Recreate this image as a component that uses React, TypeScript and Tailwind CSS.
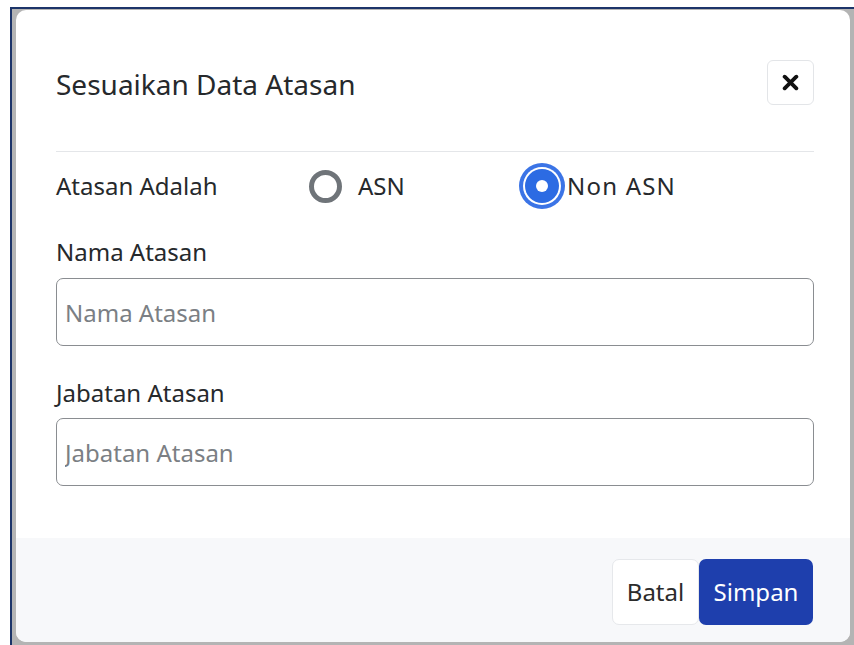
import { useState } from 'react'

type Choice = 'asn' | 'non-asn'

function Radio({ checked }: { checked: boolean }) {
  if (checked) {
    return (
      <span className="flex h-[34px] w-[34px] shrink-0 items-center justify-center rounded-full bg-[#2c6be3] shadow-[0_0_0_2px_#ffffff,0_0_0_6px_#3b74e6]">
        <span className="h-[12px] w-[12px] rounded-full bg-white" />
      </span>
    )
  }
  return <span className="h-[33px] w-[33px] shrink-0 rounded-full border-[5px] border-[#6f7479] bg-white" />
}

function CloseIcon() {
  return (
    <svg width="17" height="17" viewBox="0 0 16 16" fill="none">
      <path d="M2.5 2.5 13.5 13.5M13.5 2.5 2.5 13.5" stroke="#111" strokeWidth="3.6" strokeLinecap="round" />
    </svg>
  )
}

export default function App() {
  const [choice, setChoice] = useState<Choice>('non-asn')

  return (
    <div className="h-[645px] w-[854px] overflow-hidden bg-white pl-[10px] pt-[7px] font-['Noto_Sans',sans-serif] text-[#26292c]">
      <div className="h-[640px] w-[844px] border-l-2 border-t-2 border-[#1c3469] bg-[#b4b4b4]">
        <div className="ml-[4px] mt-[1px] flex h-[632px] w-[834px] flex-col overflow-hidden rounded-[10px] bg-white">
          {/* Header */}
          <div className="px-[40px] pt-[50px]">
            <div className="flex h-[45px] w-[758px] items-center justify-between">
              <h2 className="mt-[3px] text-[28px] leading-none">Sesuaikan Data Atasan</h2>
              <button className="flex h-[45px] w-[47px] items-center justify-center rounded-[6px] border border-[#e3e5e8] bg-white">
                <CloseIcon />
              </button>
            </div>
            <div className="mt-[46px] w-[758px] border-t border-[#e4e6e9]" />
          </div>

          {/* Body */}
          <div className="px-[40px] text-[24px]">
            <div className="mt-[11px] flex h-[46px] items-center">
              <span className="w-[253px] shrink-0">Atasan Adalah</span>
              <label className="flex w-[216px] items-center" onClick={() => setChoice('asn')}>
                <Radio checked={choice === 'asn'} />
                <span className="ml-[16px]">ASN</span>
              </label>
              <label className="flex items-center" onClick={() => setChoice('non-asn')}>
                <Radio checked={choice === 'non-asn'} />
                <span className="ml-[8px] tracking-[0.05em]">Non ASN</span>
              </label>
            </div>

            <div className="mt-[28px] leading-[30px]">Nama Atasan</div>
            <input
              placeholder="Nama Atasan"
              className="mt-[11px] h-[68px] w-[758px] rounded-[7px] border-[1.5px] border-[#8a8d91] bg-white px-[8px] text-[24px] outline-none placeholder:text-[#7b7f84]"
            />

            <div className="mt-[32px] leading-[30px]">Jabatan Atasan</div>
            <input
              placeholder="Jabatan Atasan"
              className="mt-[10px] h-[68px] w-[758px] rounded-[7px] border-[1.5px] border-[#8a8d91] bg-white px-[8px] text-[24px] outline-none placeholder:text-[#7b7f84]"
            />
          </div>

          {/* Footer */}
          <div className="mt-[52px] flex flex-1 justify-end bg-[#f7f8fa] pr-[37px] pt-[21px]">
            <div className="flex h-[66px]">
              <button className="w-[87px] rounded-[7px] border border-[#e6e8eb] bg-white text-[24px] text-[#2b2b2b]">
                Batal
              </button>
              <button className="w-[114px] rounded-[7px] bg-[#1e3fad] text-[24px] text-white">Simpan</button>
            </div>
          </div>
        </div>
      </div>
    </div>
  )
}
